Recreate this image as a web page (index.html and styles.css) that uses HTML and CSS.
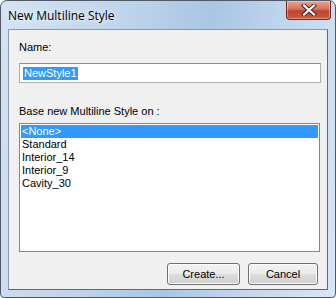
FILE: index.html
```html
<!DOCTYPE html>
<html lang="en">
<head>
    <meta charset="UTF-8">
    <title>New Multiline Style</title>
    <link rel="stylesheet" href="styles.css">
</head>
<body>
    <div class="window">
        <div class="titlebar">
            <span class="title">New Multiline Style</span>
            <div class="close-btn">
                <svg width="16" height="12" viewBox="0 0 16 12">
                    <path d="M3 1.5 L13 10.5 M13 1.5 L3 10.5" stroke="#3b2a2a" stroke-width="4.2" stroke-linecap="square"/>
                    <path d="M3 1.5 L13 10.5 M13 1.5 L3 10.5" stroke="#ffffff" stroke-width="2.2" stroke-linecap="square"/>
                </svg>
            </div>
        </div>
        <div class="client">
            <div class="label">Name:</div>
            <div class="textbox"><span class="selected">NewStyle1</span></div>
            <div class="label label-base">Base new Multiline Style on :</div>
            <div class="listbox">
                <div class="item item-selected">&lt;None&gt;</div>
                <div class="item">Standard</div>
                <div class="item">Interior_14</div>
                <div class="item">Interior_9</div>
                <div class="item">Cavity_30</div>
            </div>
            <div class="buttons">
                <button class="btn btn-create">Create...</button>
                <button class="btn btn-cancel">Cancel</button>
            </div>
        </div>
    </div>
</body>
</html>
```

FILE: styles.css
```css
body{
    margin: 0;
    background-color: #ffffff;
    font-family: Tahoma, "Liberation Sans", sans-serif;
}
.window{
    width: 336px;
    height: 298px;
    box-sizing: border-box;
    display: flex;
    flex-direction: column;
    padding: 0 7px 7px 7px;
    border: 1px solid #4f5a66;
    border-radius: 7px 7px 4px 4px;
    background: linear-gradient(100deg, #d4e3f3 0%, #bcd3ea 35%, #a9c6e3 55%, #c6daee 80%, #d7e6f5 100%);
}
.titlebar{
    height: 28px;
    display: flex;
    align-items: flex-start;
    justify-content: space-between;
}
.title{
    font-family: "Open Sans", "Noto Sans", sans-serif;
    font-size: 12px;
    color: #000;
    margin-top: 6px;
    text-shadow: 0 0 8px #eef5fc, 0 0 4px #eef5fc;
}
.close-btn{
    width: 43px;
    height: 18px;
    margin-right: -3px;
    border: 1px solid #6d2b22;
    border-top: none;
    border-radius: 0 0 4px 4px;
    background: linear-gradient(#e8a493 0%, #d7715c 45%, #c2432c 55%, #cf5a3c 100%);
    display: flex;
    align-items: center;
    justify-content: center;
    box-shadow: inset 0 0 0 1px rgba(255,255,255,0.35);
}
.client{
    flex: 1;
    background-color: #f0f0f0;
    border: 1px solid #5d6a78;
    border-top-color: #8a99aa;
    border-left-color: #8a99aa;
    padding: 0 10px 0 10px;
    font-family: "Liberation Sans", Arial, sans-serif;
    font-size: 11px;
    color: #000;
    display: flex;
    flex-direction: column;
}
.label{
    margin-top: 11px;
    height: 13px;
    line-height: 13px;
}
.textbox{
    margin-top: 9px;
    height: 18px;
    width: 297px;
    border: 1px solid #abadb3;
    border-top-color: #8e8f8f;
    background: #fff;
    padding: 0 0 0 3px;
    display: flex;
    align-items: center;
    box-sizing: content-box;
}
.selected{
    background-color: #3399ff;
    color: #fff;
    line-height: 13px;
    padding: 0 1px;
}
.label-base{
    margin-top: 22px;
}
.listbox{
    margin-top: 5px;
    width: 297px;
    height: 125px;
    border: 1px solid #828790;
    background: #fff;
    padding: 1px;
    box-sizing: content-box;
}
.item{
    height: 13px;
    line-height: 13px;
    padding-left: 1px;
}
.item-selected{
    background-color: #3399ff;
    color: #fff;
}
.buttons{
    display: flex;
    justify-content: flex-end;
    gap: 8px;
    margin-top: 11px;
    width: 299px;
}
.btn{
    height: 22px;
    font-family: "Liberation Sans", Arial, sans-serif;
    font-size: 11px;
    color: #000;
    border: 1px solid #707070;
    border-radius: 3px;
    background: linear-gradient(#f2f2f2 0%, #ebebeb 48%, #dddddd 52%, #cfcfcf 100%);
    box-shadow: inset 0 0 0 1px #fcfcfc;
    padding: 0;
}
.btn-create{
    width: 73px;
}
.btn-cancel{
    width: 70px;
}
```
